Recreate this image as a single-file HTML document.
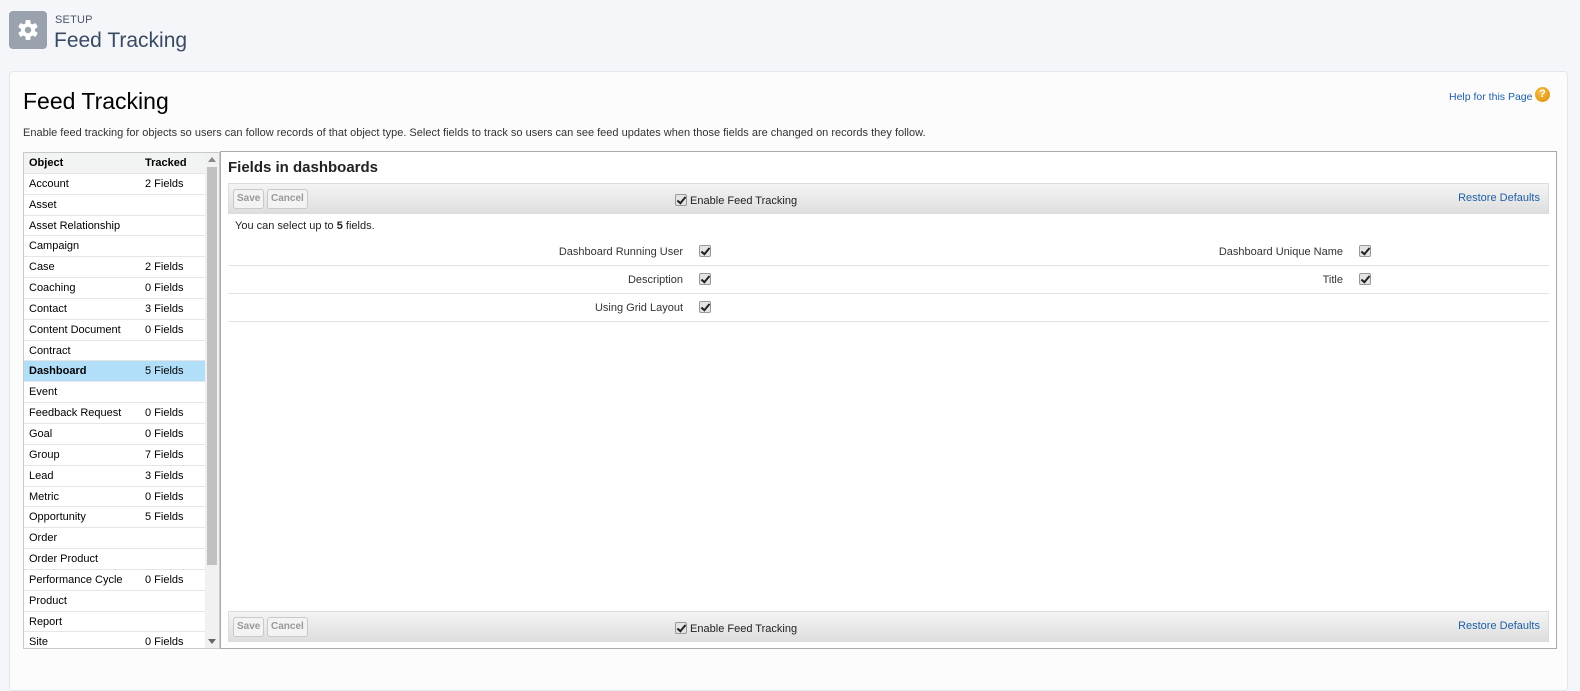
<!DOCTYPE html>
<html><head><style>
*{box-sizing:border-box;margin:0;padding:0}
body{width:1580px;height:678px;background:#f4f6f9;font-family:"Liberation Sans",Arial,sans-serif;position:relative;overflow:hidden;color:#000}
.hdr-ic{position:absolute;left:9px;top:11px;width:38px;height:38px;background:#9aa2ad;border-radius:4px}
.setup{position:absolute;left:55px;top:14px;font-size:11px;color:#4a5468;letter-spacing:.2px}
.ht{position:absolute;left:54px;top:29px;font-size:21px;color:#3b4a63;font-weight:300}
.card{position:absolute;left:9px;top:71px;width:1559px;height:620px;background:#fcfcfc;border:1px solid #e3e6ea;border-radius:4px}
h1{position:absolute;left:23px;top:88px;font-size:23px;font-weight:normal;color:#000}
.help{position:absolute;left:1449px;top:91px;font-size:10.5px;color:#1f5fa6}
.q{position:absolute;left:1535px;top:87px;width:15px;height:15px;border-radius:50%;background:radial-gradient(circle at 40% 35%,#f7c04a,#d98a00);color:#fff;font-size:11px;font-weight:bold;text-align:center;line-height:15px}
.desc{position:absolute;left:23px;top:127px;font-size:11px;color:#333}
.lt{position:absolute;left:23px;top:152px;width:197px;height:497px;border:1px solid #c9c9c9;background:#fff;overflow:hidden}
.row{height:20.85px;border-bottom:1px solid #e5e5e5;font-size:11px;line-height:21px;position:relative;width:181px}
.row span{position:absolute;left:5px}.row b{position:absolute;left:121px;font-weight:normal}
.row.h{background:#f2f3f3;font-weight:bold}.row.h b{font-weight:bold}
.row.sel{background:#b1def8;font-weight:bold}.row.sel b{font-weight:normal}
.sb{position:absolute;left:181px;top:0;width:14px;height:497px;background:#f1f1f1}
.th{position:absolute;left:2px;top:14px;width:10px;height:398px;background:#c1c1c1}
.rp{position:absolute;left:220px;top:151px;width:1337px;height:498px;border:1px solid #aaa;background:#fff}
.rt{position:absolute;left:7px;top:7px;font-size:15px;font-weight:bold;color:#222}
.bar{position:absolute;left:7px;width:1321px;height:31px;background:linear-gradient(#f4f4f4,#dedede);border:1px solid #dcdcdc}
.btn{position:absolute;top:5px;height:20px;border:1px solid #c9c9c9;border-radius:3px;background:#f3f3f3;color:#999;font-size:10px;font-weight:bold;line-height:18px;padding:0 3px}
.cb{display:inline-block;width:12px;height:12px;border:1px solid #999;border-radius:2px;background:#e4e4e4;position:relative;vertical-align:-2px}
.cb:after{content:"";position:absolute;left:3px;top:0px;width:3px;height:7px;border:solid #222;border-width:0 2px 2px 0;transform:rotate(40deg)}
.eft{position:absolute;left:446px;top:10px;font-size:11px;color:#222}
.rd{position:absolute;right:8px;top:8px;font-size:11px;color:#1f5fa6}
.note{position:absolute;left:14px;top:68px;font-size:11px;color:#222}
.fr{position:absolute;left:7px;width:1321px;height:28px;border-bottom:1px solid #e3e3e3;font-size:11px;color:#333}
</style></head><body>
<div class="hdr-ic"><svg width="38" height="38" viewBox="0 0 38 38"><g fill="#fff" transform="translate(19,19)"><circle r="7"/><g id="t"><rect x="-2.5" y="-10" width="5" height="5" rx="1"/></g><use href="#t" transform="rotate(60)"/><use href="#t" transform="rotate(120)"/><use href="#t" transform="rotate(180)"/><use href="#t" transform="rotate(240)"/><use href="#t" transform="rotate(300)"/></g><circle cx="19" cy="19" r="3.2" fill="#9aa2ad"/></svg></div>
<div class="setup">SETUP</div>
<div class="ht">Feed Tracking</div>
<div class="card"></div>
<h1>Feed Tracking</h1>
<div class="help">Help for this Page</div><div class="q">?</div>
<div class="desc">Enable feed tracking for objects so users can follow records of that object type. Select fields to track so users can see feed updates when those fields are changed on records they follow.</div>
<div class="lt">
<div class="row h"><span>Object</span><b>Tracked</b></div>
<div class="row"><span>Account</span><b>2 Fields</b></div>
<div class="row"><span>Asset</span></div>
<div class="row"><span>Asset Relationship</span></div>
<div class="row"><span>Campaign</span></div>
<div class="row"><span>Case</span><b>2 Fields</b></div>
<div class="row"><span>Coaching</span><b>0 Fields</b></div>
<div class="row"><span>Contact</span><b>3 Fields</b></div>
<div class="row"><span>Content Document</span><b>0 Fields</b></div>
<div class="row"><span>Contract</span></div>
<div class="row sel"><span>Dashboard</span><b>5 Fields</b></div>
<div class="row"><span>Event</span></div>
<div class="row"><span>Feedback Request</span><b>0 Fields</b></div>
<div class="row"><span>Goal</span><b>0 Fields</b></div>
<div class="row"><span>Group</span><b>7 Fields</b></div>
<div class="row"><span>Lead</span><b>3 Fields</b></div>
<div class="row"><span>Metric</span><b>0 Fields</b></div>
<div class="row"><span>Opportunity</span><b>5 Fields</b></div>
<div class="row"><span>Order</span></div>
<div class="row"><span>Order Product</span></div>
<div class="row"><span>Performance Cycle</span><b>0 Fields</b></div>
<div class="row"><span>Product</span></div>
<div class="row"><span>Report</span></div>
<div class="row"><span>Site</span><b>0 Fields</b></div>
<div class="sb"><div style="position:absolute;left:3px;top:4px;border:4px solid transparent;border-bottom:5px solid #888;border-top:0"></div><div class="th"></div><div style="position:absolute;left:3px;top:486px;border:4px solid transparent;border-top:5px solid #666;border-bottom:0"></div></div>
</div>
<div class="rp">
<div class="rt">Fields in dashboards</div>
<div class="bar" style="top:31px"><div class="btn" style="left:4px">Save</div><div class="btn" style="left:38px">Cancel</div><div class="eft"><span class="cb"></span> Enable Feed Tracking</div><div class="rd">Restore Defaults</div></div>
<div class="note">You can select up to <b>5</b> fields.</div>
<div class="fr" style="top:86px"><span style="position:absolute;right:866px;top:8px">Dashboard Running User</span><span class="cb" style="position:absolute;left:471px;top:7px"></span><span style="position:absolute;right:206px;top:8px">Dashboard Unique Name</span><span class="cb" style="position:absolute;left:1131px;top:7px"></span></div>
<div class="fr" style="top:114px"><span style="position:absolute;right:866px;top:8px">Description</span><span class="cb" style="position:absolute;left:471px;top:7px"></span><span style="position:absolute;right:206px;top:8px">Title</span><span class="cb" style="position:absolute;left:1131px;top:7px"></span></div>
<div class="fr" style="top:142px"><span style="position:absolute;right:866px;top:8px">Using Grid Layout</span><span class="cb" style="position:absolute;left:471px;top:7px"></span></div>
<div class="bar" style="top:459px"><div class="btn" style="left:4px">Save</div><div class="btn" style="left:38px">Cancel</div><div class="eft"><span class="cb"></span> Enable Feed Tracking</div><div class="rd">Restore Defaults</div></div>
</div>
</body></html>
